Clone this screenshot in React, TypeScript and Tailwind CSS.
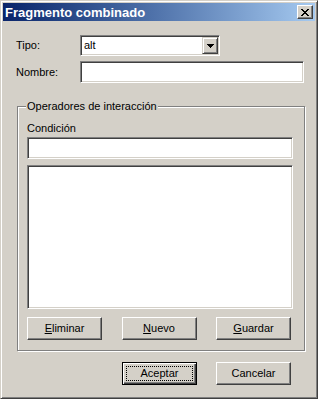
import React from "react";

const font = { fontFamily: '"Liberation Sans", Arial, sans-serif' };

function Sunken({ className = "", children }: { className?: string; children?: React.ReactNode }) {
  return (
    <div
      className={`bg-white border border-t-[#808080] border-l-[#808080] border-r-white border-b-white shadow-[inset_1px_1px_0_#404040,inset_-1px_-1px_0_#d4d0c8] ${className}`}
    >
      {children}
    </div>
  );
}

function Btn({ children, def = false }: { children: React.ReactNode; def?: boolean }) {
  if (def) {
    return (
      <div className="w-[75px] h-[23px] border border-black flex bg-[#d4d0c8]">
        <div className="flex-1 flex shadow-[inset_1px_1px_0_#ffffff,inset_-1px_-1px_0_#404040,inset_-2px_-2px_0_#808080]">
          <div className="flex-1 m-[3px] border border-dotted border-black flex items-center justify-center text-[11px] text-black">
            {children}
          </div>
        </div>
      </div>
    );
  }
  return (
    <div className="w-[75px] h-[23px] bg-[#d4d0c8] border border-t-white border-l-white border-r-[#404040] border-b-[#404040] shadow-[inset_-1px_-1px_0_#808080] flex items-center justify-center text-[11px] text-black">
      {children}
    </div>
  );
}

export default function App() {
  return (
    <div
      style={font}
      className="w-[318px] h-[399px] bg-[#d4d0c8] border border-t-[#d4d0c8] border-l-[#d4d0c8] border-r-[#404040] border-b-[#404040] shadow-[inset_1px_1px_0_#ffffff,inset_-1px_-1px_0_#808080] p-[2px] flex flex-col text-[11px] text-black"
    >
      {/* Title bar */}
      <div className="h-[18px] flex items-center justify-between bg-gradient-to-r from-[#0a246a] to-[#a6caf0] pl-[2px] pr-[2px]">
        <span className="text-white font-bold text-[13px] leading-none">Fragmento combinado</span>
        <div className="w-[16px] h-[14px] bg-[#d4d0c8] border border-t-white border-l-white border-r-[#404040] border-b-[#404040] shadow-[inset_-1px_-1px_0_#808080] flex items-center justify-center">
          <svg width="8" height="7" viewBox="0 0 8 7" shapeRendering="crispEdges">
            <path d="M0 0h2v1h-2zM6 0h2v1h-2zM1 1h2v1h-2zM5 1h2v1h-2zM2 2h4v1h-4zM3 3h2v1h-2zM2 4h4v1h-4zM1 5h2v1h-2zM5 5h2v1h-2zM0 6h2v1h-2zM6 6h2v1h-2z" fill="#000" />
          </svg>
        </div>
      </div>

      {/* Content */}
      <div className="flex flex-col pl-[13px]">
        <div className="flex items-center mt-[14px]">
          <span className="w-[64px]">Tipo:</span>
          <Sunken className="w-[140px] h-[21px] flex items-center">
            <span className="flex-1 pl-[3px]">alt</span>
            <div className="w-[16px] h-[17px] mr-[1px] bg-[#d4d0c8] border border-t-[#d4d0c8] border-l-[#d4d0c8] border-r-[#404040] border-b-[#404040] shadow-[inset_1px_1px_0_#ffffff,inset_-1px_-1px_0_#808080] flex items-center justify-center">
              <svg width="7" height="4" viewBox="0 0 7 4" shapeRendering="crispEdges">
                <path d="M0 0h7v1h-7zM1 1h5v1h-5zM2 2h3v1h-3zM3 3h1v1h-1z" fill="#000" />
              </svg>
            </div>
          </Sunken>
        </div>
        <div className="flex items-center mt-[5px]">
          <span className="w-[64px]">Nombre:</span>
          <Sunken className="w-[224px] h-[22px]" />
        </div>

        <fieldset className="ml-[1px] mt-[17px] w-[288px] border border-[#808080] shadow-[inset_1px_1px_0_#ffffff,1px_1px_0_#ffffff] pl-[9px] pb-[10px]">
          <legend className="-ml-[1px] px-[1px] bg-[#d4d0c8] leading-[13px]">Operadores de interacción</legend>
          <span className="block mt-[9px] leading-[13px]">Condición</span>
          <Sunken className="w-[266px] h-[22px] mt-[2px]" />
          <Sunken className="w-[266px] h-[144px] mt-[6px]" />
          <div className="w-[264px] flex justify-between mt-[8px]">
            <Btn>
              <span className="underline">E</span>liminar
            </Btn>
            <Btn>
              <span className="underline">N</span>uevo
            </Btn>
            <Btn>
              <span className="underline">G</span>uardar
            </Btn>
          </div>
        </fieldset>

        <div className="flex justify-end gap-[19px] pr-[24px] mt-[11px]">
          <Btn def>Aceptar</Btn>
          <Btn>Cancelar</Btn>
        </div>
      </div>
    </div>
  );
}
